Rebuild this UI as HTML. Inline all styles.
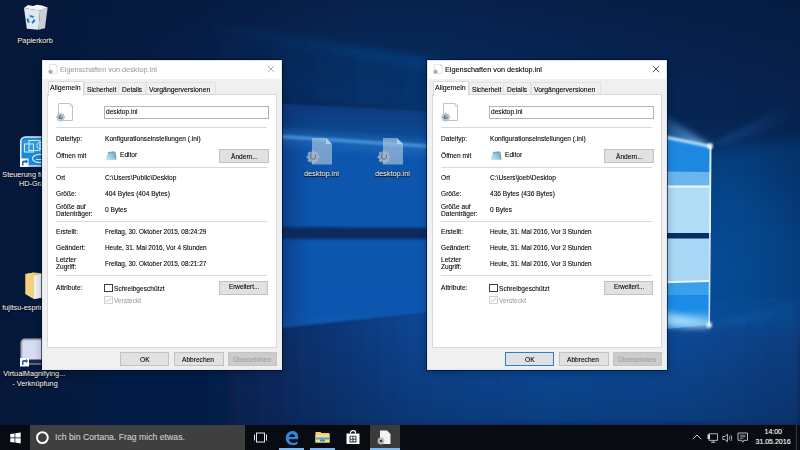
<!DOCTYPE html>
<html><head><meta charset="utf-8">
<style>
*{margin:0;padding:0;box-sizing:border-box}
html,body{width:800px;height:450px;overflow:hidden;background:#04163a;font-family:"Liberation Sans",sans-serif}
.abs{position:absolute}
.t{position:absolute;white-space:pre;line-height:1;transform-origin:0 0;-webkit-text-stroke:0.1px currentColor}
.dlg{position:absolute;top:60px;width:240px;height:310px;background:#f0f0f0;border:1px solid #6f7f95;box-shadow:0 0 0 1px rgba(0,8,28,0.6),0 2px 8px rgba(0,0,0,0.3)}
</style></head><body>
<svg class="abs" style="left:0;top:0" width="800" height="425" viewBox="0 0 800 425">
<defs>
<radialGradient id="gright" cx="700" cy="270" r="190" gradientUnits="userSpaceOnUse" gradientTransform="translate(700 270) scale(1 0.85) translate(-700 -270)">
<stop offset="0" stop-color="#0b4a94"/><stop offset="0.5" stop-color="#0a4288" stop-opacity="0.7"/><stop offset="1" stop-color="#0a3470" stop-opacity="0"/>
</radialGradient>
<linearGradient id="gproj" x1="0" y1="105" x2="0" y2="330" gradientUnits="userSpaceOnUse">
<stop offset="0" stop-color="#0a3a7c"/><stop offset="0.15" stop-color="#0a4a96"/><stop offset="0.2" stop-color="#0b55ac"/><stop offset="1" stop-color="#0b58b0"/>
</linearGradient>
<linearGradient id="gbot" x1="200" y1="0" x2="800" y2="0" gradientUnits="userSpaceOnUse">
<stop offset="0" stop-color="#061e48"/><stop offset="0.15" stop-color="#082e68"/><stop offset="0.35" stop-color="#0a4490"/><stop offset="0.58" stop-color="#0b4e9e"/><stop offset="0.8" stop-color="#0b4a98"/><stop offset="1" stop-color="#0a3e80"/>
</linearGradient>
<linearGradient id="gbotv" x1="0" y1="325" x2="0" y2="425" gradientUnits="userSpaceOnUse">
<stop offset="0" stop-color="#051839" stop-opacity="0"/><stop offset="1" stop-color="#051839" stop-opacity="0.3"/>
</linearGradient>
<linearGradient id="gtop" x1="0" y1="0" x2="0" y2="90" gradientUnits="userSpaceOnUse">
<stop offset="0" stop-color="#051839" stop-opacity="0.55"/><stop offset="1" stop-color="#051839" stop-opacity="0"/>
</linearGradient>
<linearGradient id="gbase" x1="0" y1="0" x2="800" y2="0" gradientUnits="userSpaceOnUse">
<stop offset="0" stop-color="#05183a"/><stop offset="0.25" stop-color="#061f4a"/><stop offset="0.45" stop-color="#092d62"/><stop offset="0.55" stop-color="#082c62"/><stop offset="0.8" stop-color="#072554"/><stop offset="1" stop-color="#06214c"/>
</linearGradient>
<linearGradient id="gsideR" x1="711" y1="0" x2="840" y2="0" gradientUnits="userSpaceOnUse">
<stop offset="0" stop-color="#0a529c" stop-opacity="0.55"/><stop offset="1" stop-color="#0a4c94" stop-opacity="0.2"/>
</linearGradient>
<linearGradient id="gstreak" x1="200" y1="0" x2="420" y2="0" gradientUnits="userSpaceOnUse"><stop offset="0" stop-color="#0c4890" stop-opacity="0"/><stop offset="1" stop-color="#0c4890" stop-opacity="0.55"/></linearGradient>
<linearGradient id="gstreak2" x1="200" y1="0" x2="420" y2="0" gradientUnits="userSpaceOnUse"><stop offset="0" stop-color="#0a3a7a" stop-opacity="0"/><stop offset="1" stop-color="#0a3a7a" stop-opacity="0.45"/></linearGradient>
<linearGradient id="gfan" x1="711" y1="146" x2="640" y2="120" gradientUnits="userSpaceOnUse"><stop offset="0" stop-color="#7cc8ff" stop-opacity="0.9"/><stop offset="1" stop-color="#2a80d8" stop-opacity="0"/></linearGradient>
<linearGradient id="gfanR" x1="711" y1="146" x2="800" y2="108" gradientUnits="userSpaceOnUse"><stop offset="0" stop-color="#3a90e0" stop-opacity="0.35"/><stop offset="1" stop-color="#1a5aa8" stop-opacity="0"/></linearGradient>
<linearGradient id="gfanR2" x1="709" y1="325" x2="800" y2="310" gradientUnits="userSpaceOnUse"><stop offset="0" stop-color="#3a90e0" stop-opacity="0.35"/><stop offset="1" stop-color="#1a5aa8" stop-opacity="0"/></linearGradient>
<filter id="b2" x="-10%" y="-10%" width="120%" height="120%"><feGaussianBlur stdDeviation="2.5"/></filter>
<filter id="b1" x="-10%" y="-10%" width="120%" height="120%"><feGaussianBlur stdDeviation="1.2"/></filter>
<filter id="b3" x="-20%" y="-50%" width="140%" height="200%"><feGaussianBlur stdDeviation="3"/></filter>
<filter id="b8" x="-50%" y="-50%" width="200%" height="200%"><feGaussianBlur stdDeviation="8"/></filter>
<clipPath id="clogo"><rect x="600" y="100" width="110" height="240"/></clipPath>
</defs>
<rect width="800" height="425" fill="url(#gbase)"/>
<rect width="800" height="425" fill="url(#gright)"/>
<rect x="0" y="0" width="800" height="90" fill="url(#gtop)"/>
<polygon points="200,20 428,58 620,92 620,106 428,72 200,32" fill="url(#gstreak)" filter="url(#b3)"/>
<polygon points="200,32 428,72 620,106 620,140 428,110 200,90" fill="url(#gstreak2)" filter="url(#b3)"/>
<!-- below projection -->
<polygon points="100,343 281,326 428,310 711,298 800,298 800,425 100,425" fill="url(#gbot)" filter="url(#b3)"/>
<rect x="0" y="325" width="800" height="100" fill="url(#gbotv)"/>
<!-- projection of light -->
<polygon points="230,101 428,111 600,124 711,146 711,300 428,312.5 281,328 230,333" fill="url(#gproj)" filter="url(#b1)"/>
<polygon points="230,101 300,105 300,330 230,331" fill="#072c66" opacity="0.35" filter="url(#b8)"/>
<polygon points="230,131.5 428,144.5 600,156 600,159 428,148 230,135" fill="#5aa8ea" opacity="0.85" filter="url(#b1)"/>
<polygon points="230,126 428,140 600,150 600,166 428,156 230,142" fill="#2f80d0" opacity="0.35" filter="url(#b3)"/>
<polygon points="230,227 711,229 711,239 230,239" fill="#072c5e" filter="url(#b1)"/>
<!-- right side glow + rays -->
<polygon points="711,150 840,130 840,335 711,325" fill="url(#gsideR)" filter="url(#b8)"/>
<polygon points="711,146 640,100 640,150" fill="url(#gfan)" filter="url(#b3)"/>
<polygon points="711,146 800,95 800,120" fill="url(#gfanR)" filter="url(#b3)"/>
<polygon points="709,325 800,300 800,318" fill="url(#gfanR2)" filter="url(#b3)"/>
<!-- logo panes -->
<polygon points="600,123 711,146 711,233 600,233" fill="#1e88e0"/>
<polygon points="600,171 711,172 711,187 600,187" fill="#6ab6ec"/>
<polygon points="600,187 711,187 711,233 600,233" fill="#b0dcf6"/>
<polygon points="600,185.6 711,185.6 711,187.4 600,187.4" fill="#eef8ff"/>
<polygon points="600,233 711,233 711,238.5 600,238.5" fill="#0a2e60"/>
<polygon points="600,238.5 709,238.5 709,281 600,284" fill="#a8d6f4"/>
<polygon points="600,284 709,281 709,295.5 600,296" fill="#3aa0ea"/>
<polygon points="600,296 709,295.5 709,325 600,335" fill="#1a8ce6"/>
<polygon points="600,283 709,280 709,282 600,285" fill="#e8f6ff"/>
<polygon points="709.5,146 711.5,146 710,326 708.5,326" fill="#e6f6ff" opacity="0.9"/>
<polygon points="600,122 711,145 711,148 600,125" fill="#cfeeff" opacity="0.9" filter="url(#b1)"/>
<polygon points="660,310 709,323 709,327 660,326" fill="#d8f2ff" opacity="0.6" filter="url(#b3)"/>
<circle cx="710" cy="146" r="3" fill="#ffffff" opacity="0.8" filter="url(#b1)"/>
<circle cx="709" cy="325" r="3" fill="#ffffff" opacity="0.8" filter="url(#b1)"/>
<g clip-path="url(#clogo)"><ellipse cx="695" cy="321" rx="26" ry="7" fill="#bfe6ff" opacity="0.45" filter="url(#b3)"/></g>
</svg>

<style>
.lbl{position:absolute;white-space:pre;line-height:1;color:#fff;font-size:7.3px;text-shadow:0 0 1.5px #000,0 1px 1px #000}
</style>
<!-- recycle bin -->
<svg class="abs" style="left:0;top:0" width="60" height="35" viewBox="0 0 60 35">
<path d="M24 8 L40 10.5 L38.5 29.8 L26.8 28.8 Z" fill="#e4e7ec"/>
<path d="M40 10.5 L47.6 7.5 L45 28.2 L38.5 29.8 Z" fill="#c9cfd7"/>
<path d="M24 8 L28 5 L33 6 L37 4.8 L42 5.5 L47.6 7.5 L40 10.5 Z" fill="#f4f5f7"/>
<circle cx="31" cy="19.5" r="3.3" fill="none" stroke="#1b7fd0" stroke-width="2" stroke-dasharray="4.2 2.7"/>
</svg>
<div class="lbl" style="left:17.5px;top:37.3px">Papierkorb</div>
<!-- intel -->
<svg class="abs" style="left:19px;top:136px" width="32" height="32" viewBox="0 0 32 32">
<rect x="1.8" y="1" width="28.5" height="29" rx="4.5" fill="#1a8ad4" stroke="#d8eef9" stroke-width="1.6"/>
<rect x="4" y="3.5" width="24" height="13" rx="2" fill="#2a9ae0"/>
<rect x="5.5" y="8" width="9" height="8" fill="none" stroke="#d4ecf8" stroke-width="1"/>
<rect x="10" y="4.5" width="11" height="10" fill="none" stroke="#d4ecf8" stroke-width="1"/>
<circle cx="21" cy="9.5" r="3.2" fill="none" stroke="#e6f4fb" stroke-width="1"/>
<path d="M20.2 8 L22.6 9.5 L20.2 11 Z" fill="#e6f4fb"/>
<ellipse cx="21" cy="22.5" rx="7.5" ry="4.2" fill="none" stroke="#d4ecf8" stroke-width="1.2"/>
<path d="M17 23.5 h8" stroke="#d4ecf8" stroke-width="1"/>
<rect x="1" y="22.5" width="8.5" height="8.5" fill="#fff"/>
<path d="M3 29.5 L3 26.5 C3 25 4 24.5 5.5 24.5 H7 V23.3 L9 25.5 L7 27.7 V26.5 H5.5 C4.7 26.5 4.5 27 4.5 27.7 V29.5 Z" fill="#2a5fc0"/>
</svg>
<div class="lbl" style="left:2.3px;top:171px">Steuerung für Intel(R)</div>
<div class="lbl" style="left:19px;top:180.3px">HD-Grafik</div>
<!-- folder -->
<svg class="abs" style="left:24px;top:272px" width="26" height="28" viewBox="0 0 26 28">
<path d="M1.5 2 L10 0.5 L24 2 V25 L10 27 L1.5 22 Z" fill="#e9c86e"/>
<path d="M10 3.5 L20 1.5 V25 L10 27 Z" fill="#eef1f6"/>
<path d="M1.5 2 L10 0.5 V27 L1.5 22 Z" fill="#f2d27e"/>
</svg>
<div class="lbl" style="left:2.2px;top:303.5px">fujitsu-esprimo</div>
<!-- magnifier -->
<svg class="abs" style="left:19px;top:338px" width="32" height="29" viewBox="0 0 32 29">
<rect x="2.5" y="1.5" width="28" height="24" rx="3.5" fill="#dfe3f0" stroke="#a8acb6" stroke-width="2"/>
<rect x="4" y="4" width="25" height="17" fill="#d7dcf3"/>
<rect x="3.5" y="21.5" width="26" height="4" fill="#1a2a4a"/>
<rect x="1" y="20" width="9" height="8.5" fill="#fff"/>
<path d="M3 27 L3 24 C3 22.5 4 22 5.5 22 H7 V20.8 L9 23 L7 25.2 V24 H5.5 C4.7 24 4.5 24.5 4.5 25.2 V27 Z" fill="#2a5fc0"/>
</svg>
<div class="lbl" style="left:3.3px;top:369.8px">VirtualMagnifying...</div>
<div class="lbl" style="left:12.3px;top:379.9px">- Verknüpfung</div>
<!-- hidden desktop.ini icons -->
<svg class="abs" style="left:304px;top:137px" width="30" height="29" viewBox="0 0 30 29">
<path d="M8 1 H22 L28 7 V27.5 H8 Z" fill="#b4cde3" opacity="0.62"/>
<path d="M22 1 V7 H28 Z" fill="#d6e6f3" opacity="0.6"/>
<path d="M13.76 18.45 L15.38 18.73 L15.38 21.27 L13.76 21.55 L13.46 22.27 L14.40 23.61 L12.61 25.40 L11.27 24.46 L10.55 24.76 L10.27 26.38 L7.73 26.38 L7.45 24.76 L6.73 24.46 L5.39 25.40 L3.60 23.61 L4.54 22.27 L4.24 21.55 L2.62 21.27 L2.62 18.73 L4.24 18.45 L4.54 17.73 L3.60 16.39 L5.39 14.60 L6.73 15.54 L7.45 15.24 L7.73 13.62 L10.27 13.62 L10.55 15.24 L11.27 15.54 L12.61 14.60 L14.40 16.39 L13.46 17.73 Z" fill="#a9b6c4" opacity="0.85"/>
<path d="M7.5 16.5 C5.8 17.8 6.2 22 9 22.2 C11.2 22.3 12 20 11.2 17.8" fill="none" stroke="#5b6c80" stroke-width="1.1" opacity="0.9"/>
</svg>
<div class="lbl" style="left:304px;top:169.5px">desktop.ini</div>
<svg class="abs" style="left:375px;top:137px" width="30" height="29" viewBox="0 0 30 29">
<path d="M8 1 H22 L28 7 V27.5 H8 Z" fill="#b4cde3" opacity="0.62"/>
<path d="M22 1 V7 H28 Z" fill="#d6e6f3" opacity="0.6"/>
<path d="M13.76 18.45 L15.38 18.73 L15.38 21.27 L13.76 21.55 L13.46 22.27 L14.40 23.61 L12.61 25.40 L11.27 24.46 L10.55 24.76 L10.27 26.38 L7.73 26.38 L7.45 24.76 L6.73 24.46 L5.39 25.40 L3.60 23.61 L4.54 22.27 L4.24 21.55 L2.62 21.27 L2.62 18.73 L4.24 18.45 L4.54 17.73 L3.60 16.39 L5.39 14.60 L6.73 15.54 L7.45 15.24 L7.73 13.62 L10.27 13.62 L10.55 15.24 L11.27 15.54 L12.61 14.60 L14.40 16.39 L13.46 17.73 Z" fill="#a9b6c4" opacity="0.85"/>
<path d="M7.5 16.5 C5.8 17.8 6.2 22 9 22.2 C11.2 22.3 12 20 11.2 17.8" fill="none" stroke="#5b6c80" stroke-width="1.1" opacity="0.9"/>
</svg>
<div class="lbl" style="left:375px;top:169.5px">desktop.ini</div>

<div class="dlg" style="left:42px;border-color:#e4e8ee">
<div class="abs" style="left:0px;top:0px;width:238px;height:17.5px;background:#fff"></div>
<div class="abs" style="left:5px;top:3px"><svg class="abs" style="left:0px;top:0px;opacity:1" width="9.9" height="10.450000000000001" viewBox="0 0 18 19">
<path d="M2.5 0.5 H14 L16.5 3 V17.5 H2.5 Z" fill="#fff" stroke="#c9c9c9" stroke-width="1"/>
<path d="M14 0.5 V3 H16.5" fill="none" stroke="#c9c9c9" stroke-width="0.8"/>
<path d="M7.93 13.12 L9.11 13.30 L9.11 15.10 L7.93 15.28 L7.72 15.79 L8.42 16.76 L7.16 18.02 L6.19 17.32 L5.68 17.53 L5.50 18.71 L3.70 18.71 L3.52 17.53 L3.01 17.32 L2.04 18.02 L0.78 16.76 L1.48 15.79 L1.27 15.28 L0.09 15.10 L0.09 13.30 L1.27 13.12 L1.48 12.61 L0.78 11.64 L2.04 10.38 L3.01 11.08 L3.52 10.87 L3.70 9.69 L5.50 9.69 L5.68 10.87 L6.19 11.08 L7.16 10.38 L8.42 11.64 L7.72 12.61 Z" fill="#c4c8cc"/>
<circle cx="4.6" cy="14.2" r="1.9" fill="#5f6d7c"/><circle cx="5.1" cy="13.8" r="1.0" fill="#c4c8cc"/>
</svg></div>
<div class="t" style="left:16.5px;top:4.58px;font-size:7.96px;color:#a2a2a2;transform:scaleX(0.917);">Eigenschaften von desktop.ini</div>
<svg class="abs" style="left:224px;top:4px" width="8" height="8" viewBox="0 0 8 8"><path d="M0.8 0.8 L7.2 7.2 M7.2 0.8 L0.8 7.2" stroke="#9a9a9a" stroke-width="0.8"/></svg>
<div class="abs" style="left:40.5px;top:21px;width:35px;height:12.5px;background:#f0f0f0;border:1px solid #e2e2e2;border-bottom:none"></div>
<div class="abs" style="left:75px;top:21px;width:28px;height:12.5px;background:#f0f0f0;border:1px solid #e2e2e2;border-bottom:none"></div>
<div class="abs" style="left:102.5px;top:21px;width:70px;height:12.5px;background:#f0f0f0;border:1px solid #e2e2e2;border-bottom:none"></div>
<div class="abs" style="left:4px;top:33px;width:229.5px;height:254px;background:#fff;border:1px solid #d9d9d9"></div>
<div class="abs" style="left:4.5px;top:19.5px;width:36.5px;height:15.5px;background:#fff;border:1px solid #d9d9d9;border-bottom:none"></div>
<div class="t" style="left:7px;top:23.19px;font-size:7.63px;color:#000;transform:scaleX(0.917);">Allgemein</div>
<div class="t" style="left:44px;top:24.65px;font-size:7.19px;color:#000;transform:scaleX(0.917);">Sicherheit</div>
<div class="t" style="left:79.1px;top:24.65px;font-size:7.19px;color:#000;transform:scaleX(0.917);">Details</div>
<div class="t" style="left:106.2px;top:24.51px;font-size:7.48px;color:#000;transform:scaleX(0.917);">Vorgängerversionen</div>
<div class="abs" style="left:13px;top:42px"><svg class="abs" style="left:0px;top:0px;opacity:1" width="18.0" height="19.0" viewBox="0 0 18 19">
<path d="M2.5 0.5 H14 L16.5 3 V17.5 H2.5 Z" fill="#fff" stroke="#c4c4c4" stroke-width="1"/>
<path d="M14 0.5 V3 H16.5" fill="none" stroke="#c4c4c4" stroke-width="0.8"/>
<path d="M7.93 13.12 L9.11 13.30 L9.11 15.10 L7.93 15.28 L7.72 15.79 L8.42 16.76 L7.16 18.02 L6.19 17.32 L5.68 17.53 L5.50 18.71 L3.70 18.71 L3.52 17.53 L3.01 17.32 L2.04 18.02 L0.78 16.76 L1.48 15.79 L1.27 15.28 L0.09 15.10 L0.09 13.30 L1.27 13.12 L1.48 12.61 L0.78 11.64 L2.04 10.38 L3.01 11.08 L3.52 10.87 L3.70 9.69 L5.50 9.69 L5.68 10.87 L6.19 11.08 L7.16 10.38 L8.42 11.64 L7.72 12.61 Z" fill="#b9c2cb"/>
<circle cx="4.6" cy="14.2" r="1.9" fill="#5f6d7c"/><circle cx="5.1" cy="13.8" r="1.0" fill="#b9c2cb"/>
</svg></div>
<div class="abs" style="left:61px;top:45.4px;width:165px;height:13.1px;background:#fff;border:1px solid #b4b4b4"></div>
<div class="t" style="left:63.2px;top:47.00px;font-size:7.19px;color:#000;transform:scaleX(0.917);">desktop.ini</div>
<div class="abs" style="left:13px;top:66px;width:211px;height:1px;background:#d9d9d9"></div>
<div class="abs" style="left:13px;top:106px;width:211px;height:1px;background:#d9d9d9"></div>
<div class="abs" style="left:13px;top:160px;width:211px;height:1px;background:#d9d9d9"></div>
<div class="abs" style="left:13px;top:214px;width:211px;height:1px;background:#d9d9d9"></div>
<div class="t" style="left:13px;top:74.20px;font-size:7.19px;color:#000;transform:scaleX(0.917);">Dateityp:</div>
<div class="t" style="left:61.5px;top:74.20px;font-size:7.19px;color:#000;transform:scaleX(0.917);">Konfigurationseinstellungen (.ini)</div>
<div class="t" style="left:13px;top:90.75px;font-size:7.19px;color:#000;transform:scaleX(0.917);">Öffnen mit</div>
<svg class="abs" style="left:61.5px;top:90px" width="12" height="10" viewBox="0 0 12 10"><defs><linearGradient id="ged42" x1="0" y1="1" x2="1" y2="0"><stop offset="0" stop-color="#d2f0f8"/><stop offset="1" stop-color="#5ea7c4"/></linearGradient></defs><path d="M3 1.5 L9.5 0.8 L10.3 8.8 L0.5 9.3 Z" fill="url(#ged42)"/><path d="M9.5 0.8 L10.6 1.2 L11.5 8.6 L10.3 8.8 Z" fill="#7d8e96"/><path d="M3 1.5 L9.5 0.8" stroke="#5a8ea0" stroke-width="0.8"/></svg>
<div class="t" style="left:76.7px;top:90.45px;font-size:7.19px;color:#000;transform:scaleX(0.917);">Editor</div>
<div class="abs" style="left:176px;top:88px;width:49.5px;height:13.5px;background:#e1e1e1;border:1px solid #c2c2c2"></div>
<div class="t" style="left:188.2px;top:91.75px;font-size:7.19px;color:#000;transform:scaleX(0.917);">Ändern...</div>
<div class="t" style="left:13px;top:113.15px;font-size:7.19px;color:#000;transform:scaleX(0.917);">Ort</div>
<div class="t" style="left:61.5px;top:112.95px;font-size:7.19px;color:#000;transform:scaleX(0.917);">C:\Users\Public\Desktop</div>
<div class="t" style="left:13px;top:128.50px;font-size:7.19px;color:#000;transform:scaleX(0.917);">Größe:</div>
<div class="t" style="left:61.5px;top:129.05px;font-size:7.19px;color:#000;transform:scaleX(0.917);">404 Bytes (404 Bytes)</div>
<div class="t" style="left:13px;top:141.80px;font-size:7.19px;color:#000;transform:scaleX(0.917);">Größe auf</div>
<div class="t" style="left:13px;top:148.95px;font-size:7.19px;color:#000;transform:scaleX(0.917);">Datenträger:</div>
<div class="t" style="left:61.5px;top:145.15px;font-size:7.19px;color:#000;transform:scaleX(0.917);">0 Bytes</div>
<div class="t" style="left:13px;top:166.55px;font-size:7.19px;color:#000;transform:scaleX(0.917);">Erstellt:</div>
<div class="t" style="left:61.5px;top:166.65px;font-size:6.98px;color:#000;transform:scaleX(0.917);">Freitag, 30. Oktober 2015, 08:24:29</div>
<div class="t" style="left:13px;top:183.05px;font-size:7.19px;color:#000;transform:scaleX(0.917);">Geändert:</div>
<div class="t" style="left:61.5px;top:183.15px;font-size:6.98px;color:#000;transform:scaleX(0.917);">Heute, 31. Mai 2016, Vor 4 Stunden</div>
<div class="t" style="left:13px;top:194.75px;font-size:7.19px;color:#000;transform:scaleX(0.917);">Letzter</div>
<div class="t" style="left:13px;top:202.25px;font-size:7.19px;color:#000;transform:scaleX(0.917);">Zugriff:</div>
<div class="t" style="left:61.5px;top:198.65px;font-size:6.98px;color:#000;transform:scaleX(0.917);">Freitag, 30. Oktober 2015, 08:21:27</div>
<div class="t" style="left:13px;top:222.55px;font-size:7.19px;color:#000;transform:scaleX(0.917);">Attribute:</div>
<div class="abs" style="left:61px;top:223px;width:8.8px;height:7.8px;background:#fff;border:1px solid #3a3a3a"></div>
<div class="t" style="left:71.3px;top:223.65px;font-size:7.19px;color:#000;transform:scaleX(0.917);">Schreibgeschützt</div>
<div class="abs" style="left:176px;top:220px;width:49px;height:13.7px;background:#e1e1e1;border:1px solid #c2c2c2"></div>
<div class="t" style="left:185.5px;top:223.48px;font-size:6.92px;color:#000;transform:scaleX(0.917);">Erweitert...</div>
<div class="abs" style="left:61px;top:235.2px;width:8.8px;height:7.6px;background:#fff;border:1px solid #cfcfcf"></div>
<svg class="abs" style="left:61px;top:235.2px" width="9" height="8" viewBox="0 0 9 8"><path d="M1.8 4 L3.6 5.8 L7.2 2" fill="none" stroke="#b8b8b8" stroke-width="0.9"/></svg>
<div class="t" style="left:71.3px;top:235.65px;font-size:7.19px;color:#a3a3a3;transform:scaleX(0.917);">Versteckt</div>
<div class="abs" style="left:76.7px;top:291px;width:49.8px;height:14px;background:#e1e1e1;border:1px solid #c2c2c2"></div>
<div class="t" style="left:97px;top:294.90px;font-size:7.19px;color:#000;transform:scaleX(0.917);">OK</div>
<div class="abs" style="left:131px;top:291px;width:49.8px;height:14px;background:#e1e1e1;border:1px solid #c2c2c2"></div>
<div class="t" style="left:139.3px;top:294.90px;font-size:7.19px;color:#000;transform:scaleX(0.917);">Abbrechen</div>
<div class="abs" style="left:185px;top:291px;width:49.2px;height:14px;background:#cccccc;border:1px solid #c4c4c4"></div>
<div class="t" style="left:190px;top:294.90px;font-size:7.19px;color:#a0a0a0;transform:scaleX(0.917);">Übernehmen</div>
</div>
<div class="dlg" style="left:427px;border-color:#dde8f2">
<div class="abs" style="left:0px;top:0px;width:238px;height:17.5px;background:#fff"></div>
<div class="abs" style="left:5px;top:3px"><svg class="abs" style="left:0px;top:0px;opacity:1" width="9.9" height="10.450000000000001" viewBox="0 0 18 19">
<path d="M2.5 0.5 H14 L16.5 3 V17.5 H2.5 Z" fill="#fff" stroke="#c9c9c9" stroke-width="1"/>
<path d="M14 0.5 V3 H16.5" fill="none" stroke="#c9c9c9" stroke-width="0.8"/>
<path d="M7.93 13.12 L9.11 13.30 L9.11 15.10 L7.93 15.28 L7.72 15.79 L8.42 16.76 L7.16 18.02 L6.19 17.32 L5.68 17.53 L5.50 18.71 L3.70 18.71 L3.52 17.53 L3.01 17.32 L2.04 18.02 L0.78 16.76 L1.48 15.79 L1.27 15.28 L0.09 15.10 L0.09 13.30 L1.27 13.12 L1.48 12.61 L0.78 11.64 L2.04 10.38 L3.01 11.08 L3.52 10.87 L3.70 9.69 L5.50 9.69 L5.68 10.87 L6.19 11.08 L7.16 10.38 L8.42 11.64 L7.72 12.61 Z" fill="#c4c8cc"/>
<circle cx="4.6" cy="14.2" r="1.9" fill="#5f6d7c"/><circle cx="5.1" cy="13.8" r="1.0" fill="#c4c8cc"/>
</svg></div>
<div class="t" style="left:16.5px;top:4.58px;font-size:7.96px;color:#000;transform:scaleX(0.917);">Eigenschaften von desktop.ini</div>
<svg class="abs" style="left:224px;top:4px" width="8" height="8" viewBox="0 0 8 8"><path d="M0.8 0.8 L7.2 7.2 M7.2 0.8 L0.8 7.2" stroke="#222" stroke-width="0.8"/></svg>
<div class="abs" style="left:40.5px;top:21px;width:35px;height:12.5px;background:#f0f0f0;border:1px solid #e2e2e2;border-bottom:none"></div>
<div class="abs" style="left:75px;top:21px;width:28px;height:12.5px;background:#f0f0f0;border:1px solid #e2e2e2;border-bottom:none"></div>
<div class="abs" style="left:102.5px;top:21px;width:70px;height:12.5px;background:#f0f0f0;border:1px solid #e2e2e2;border-bottom:none"></div>
<div class="abs" style="left:4px;top:33px;width:229.5px;height:254px;background:#fff;border:1px solid #d9d9d9"></div>
<div class="abs" style="left:4.5px;top:19.5px;width:36.5px;height:15.5px;background:#fff;border:1px solid #d9d9d9;border-bottom:none"></div>
<div class="t" style="left:7px;top:23.19px;font-size:7.63px;color:#000;transform:scaleX(0.917);">Allgemein</div>
<div class="t" style="left:44px;top:24.65px;font-size:7.19px;color:#000;transform:scaleX(0.917);">Sicherheit</div>
<div class="t" style="left:79.1px;top:24.65px;font-size:7.19px;color:#000;transform:scaleX(0.917);">Details</div>
<div class="t" style="left:106.2px;top:24.51px;font-size:7.48px;color:#000;transform:scaleX(0.917);">Vorgängerversionen</div>
<div class="abs" style="left:13px;top:42px"><svg class="abs" style="left:0px;top:0px;opacity:1" width="18.0" height="19.0" viewBox="0 0 18 19">
<path d="M2.5 0.5 H14 L16.5 3 V17.5 H2.5 Z" fill="#fff" stroke="#c4c4c4" stroke-width="1"/>
<path d="M14 0.5 V3 H16.5" fill="none" stroke="#c4c4c4" stroke-width="0.8"/>
<path d="M7.93 13.12 L9.11 13.30 L9.11 15.10 L7.93 15.28 L7.72 15.79 L8.42 16.76 L7.16 18.02 L6.19 17.32 L5.68 17.53 L5.50 18.71 L3.70 18.71 L3.52 17.53 L3.01 17.32 L2.04 18.02 L0.78 16.76 L1.48 15.79 L1.27 15.28 L0.09 15.10 L0.09 13.30 L1.27 13.12 L1.48 12.61 L0.78 11.64 L2.04 10.38 L3.01 11.08 L3.52 10.87 L3.70 9.69 L5.50 9.69 L5.68 10.87 L6.19 11.08 L7.16 10.38 L8.42 11.64 L7.72 12.61 Z" fill="#b9c2cb"/>
<circle cx="4.6" cy="14.2" r="1.9" fill="#5f6d7c"/><circle cx="5.1" cy="13.8" r="1.0" fill="#b9c2cb"/>
</svg></div>
<div class="abs" style="left:61px;top:45.4px;width:165px;height:13.1px;background:#fff;border:1px solid #b4b4b4"></div>
<div class="t" style="left:63.2px;top:47.00px;font-size:7.19px;color:#000;transform:scaleX(0.917);">desktop.ini</div>
<div class="abs" style="left:13px;top:66px;width:211px;height:1px;background:#d9d9d9"></div>
<div class="abs" style="left:13px;top:106px;width:211px;height:1px;background:#d9d9d9"></div>
<div class="abs" style="left:13px;top:160px;width:211px;height:1px;background:#d9d9d9"></div>
<div class="abs" style="left:13px;top:214px;width:211px;height:1px;background:#d9d9d9"></div>
<div class="t" style="left:13px;top:74.20px;font-size:7.19px;color:#000;transform:scaleX(0.917);">Dateityp:</div>
<div class="t" style="left:61.5px;top:74.20px;font-size:7.19px;color:#000;transform:scaleX(0.917);">Konfigurationseinstellungen (.ini)</div>
<div class="t" style="left:13px;top:90.75px;font-size:7.19px;color:#000;transform:scaleX(0.917);">Öffnen mit</div>
<svg class="abs" style="left:61.5px;top:90px" width="12" height="10" viewBox="0 0 12 10"><defs><linearGradient id="ged427" x1="0" y1="1" x2="1" y2="0"><stop offset="0" stop-color="#d2f0f8"/><stop offset="1" stop-color="#5ea7c4"/></linearGradient></defs><path d="M3 1.5 L9.5 0.8 L10.3 8.8 L0.5 9.3 Z" fill="url(#ged427)"/><path d="M9.5 0.8 L10.6 1.2 L11.5 8.6 L10.3 8.8 Z" fill="#7d8e96"/><path d="M3 1.5 L9.5 0.8" stroke="#5a8ea0" stroke-width="0.8"/></svg>
<div class="t" style="left:76.7px;top:90.45px;font-size:7.19px;color:#000;transform:scaleX(0.917);">Editor</div>
<div class="abs" style="left:176px;top:88px;width:49.5px;height:13.5px;background:#e1e1e1;border:1px solid #c2c2c2"></div>
<div class="t" style="left:188.2px;top:91.75px;font-size:7.19px;color:#000;transform:scaleX(0.917);">Ändern...</div>
<div class="t" style="left:13px;top:113.15px;font-size:7.19px;color:#000;transform:scaleX(0.917);">Ort</div>
<div class="t" style="left:61.5px;top:112.95px;font-size:7.19px;color:#000;transform:scaleX(0.917);">C:\Users\joeb\Desktop</div>
<div class="t" style="left:13px;top:128.50px;font-size:7.19px;color:#000;transform:scaleX(0.917);">Größe:</div>
<div class="t" style="left:61.5px;top:129.05px;font-size:7.19px;color:#000;transform:scaleX(0.917);">436 Bytes (436 Bytes)</div>
<div class="t" style="left:13px;top:141.80px;font-size:7.19px;color:#000;transform:scaleX(0.917);">Größe auf</div>
<div class="t" style="left:13px;top:148.95px;font-size:7.19px;color:#000;transform:scaleX(0.917);">Datenträger:</div>
<div class="t" style="left:61.5px;top:145.15px;font-size:7.19px;color:#000;transform:scaleX(0.917);">0 Bytes</div>
<div class="t" style="left:13px;top:166.55px;font-size:7.19px;color:#000;transform:scaleX(0.917);">Erstellt:</div>
<div class="t" style="left:61.5px;top:166.65px;font-size:6.98px;color:#000;transform:scaleX(0.917);">Heute, 31. Mai 2016, Vor 3 Stunden</div>
<div class="t" style="left:13px;top:183.05px;font-size:7.19px;color:#000;transform:scaleX(0.917);">Geändert:</div>
<div class="t" style="left:61.5px;top:183.15px;font-size:6.98px;color:#000;transform:scaleX(0.917);">Heute, 31. Mai 2016, Vor 2 Stunden</div>
<div class="t" style="left:13px;top:194.75px;font-size:7.19px;color:#000;transform:scaleX(0.917);">Letzter</div>
<div class="t" style="left:13px;top:202.25px;font-size:7.19px;color:#000;transform:scaleX(0.917);">Zugriff:</div>
<div class="t" style="left:61.5px;top:198.65px;font-size:6.98px;color:#000;transform:scaleX(0.917);">Heute, 31. Mai 2016, Vor 3 Stunden</div>
<div class="t" style="left:13px;top:222.55px;font-size:7.19px;color:#000;transform:scaleX(0.917);">Attribute:</div>
<div class="abs" style="left:61px;top:223px;width:8.8px;height:7.8px;background:#fff;border:1px solid #3a3a3a"></div>
<div class="t" style="left:71.3px;top:223.65px;font-size:7.19px;color:#000;transform:scaleX(0.917);">Schreibgeschützt</div>
<div class="abs" style="left:176px;top:220px;width:49px;height:13.7px;background:#e1e1e1;border:1px solid #c2c2c2"></div>
<div class="t" style="left:185.5px;top:223.48px;font-size:6.92px;color:#000;transform:scaleX(0.917);">Erweitert...</div>
<div class="abs" style="left:61px;top:235.2px;width:8.8px;height:7.6px;background:#fff;border:1px solid #cfcfcf"></div>
<svg class="abs" style="left:61px;top:235.2px" width="9" height="8" viewBox="0 0 9 8"><path d="M1.8 4 L3.6 5.8 L7.2 2" fill="none" stroke="#b8b8b8" stroke-width="0.9"/></svg>
<div class="t" style="left:71.3px;top:235.65px;font-size:7.19px;color:#a3a3a3;transform:scaleX(0.917);">Versteckt</div>
<div class="abs" style="left:76.7px;top:291px;width:49.8px;height:14px;background:#e1e1e1;border:1px solid #2a7fd4"></div>
<div class="t" style="left:97px;top:294.90px;font-size:7.19px;color:#000;transform:scaleX(0.917);">OK</div>
<div class="abs" style="left:131px;top:291px;width:49.8px;height:14px;background:#e1e1e1;border:1px solid #c2c2c2"></div>
<div class="t" style="left:139.3px;top:294.90px;font-size:7.19px;color:#000;transform:scaleX(0.917);">Abbrechen</div>
<div class="abs" style="left:185px;top:291px;width:49.2px;height:14px;background:#cccccc;border:1px solid #c4c4c4"></div>
<div class="t" style="left:190px;top:294.90px;font-size:7.19px;color:#a0a0a0;transform:scaleX(0.917);">Übernehmen</div>
</div>
<div class="abs" style="left:0;top:425px;width:800px;height:25px;background:#080b11"></div>
<!-- start -->
<svg class="abs" style="left:9.5px;top:431.5px" width="11" height="12" viewBox="0 0 11 12">
<path d="M0.3 2 L4.6 1.4 V5.6 H0.3 Z M5.3 1.3 L10.7 0.5 V5.6 H5.3 Z M0.3 6.3 H4.6 V10.5 L0.3 9.9 Z M5.3 6.3 H10.7 V11.4 L5.3 10.6 Z" fill="#fff"/>
</svg>
<!-- search -->
<div class="abs" style="left:30px;top:425px;width:215px;height:25px;background:#3f3f3f"></div>
<svg class="abs" style="left:34px;top:429px" width="17" height="17" viewBox="0 0 17 17"><circle cx="8.4" cy="8.6" r="5.4" fill="none" stroke="#fff" stroke-width="2"/></svg>
<div class="t" style="left:55px;top:433.2px;font-size:8.7px;color:#cdcdcd">Ich bin Cortana. Frag mich etwas.</div>
<!-- task view -->
<svg class="abs" style="left:253px;top:432px" width="15" height="11" viewBox="0 0 15 11">
<rect x="3.5" y="1" width="8" height="9" fill="none" stroke="#e6e6e6" stroke-width="1"/>
<path d="M1.5 2.5 V8.5 M13.5 2.5 V8.5" stroke="#e6e6e6" stroke-width="1"/>
</svg>
<!-- edge -->
<svg class="abs" style="left:285px;top:431px" width="14" height="14" viewBox="0 0 14 14">
<path d="M12.8 8.3 H4 C4.2 10.6 6 11.9 8.3 11.9 C10 11.9 11.4 11.3 12.5 10.6 V12.9 C11.3 13.6 9.7 14 7.8 14 C3.5 14 0.8 11.3 0.8 7.3 C0.8 3.2 3.6 0 7.6 0 C11.2 0 13.2 2.6 13.2 6.2 Z M4.1 6 H10 C9.9 4.1 8.9 2.9 7.2 2.9 C5.6 2.9 4.4 4.1 4.1 6 Z" fill="#2b8ae0"/>
</svg>
<!-- explorer -->
<svg class="abs" style="left:315px;top:431px" width="15" height="12" viewBox="0 0 15 12">
<path d="M0.5 1 H5.5 L6.5 2 H14.5 V11.5 H0.5 Z" fill="#f0cf6a"/>
<rect x="0.5" y="3.5" width="14" height="8" fill="#f7dc85"/>
<rect x="0.5" y="6.5" width="14" height="2" fill="#4aa6d6"/>
<path d="M5 8.5 H10 V10.5 H5 Z" fill="#3b8fc0"/>
</svg>
<!-- store -->
<svg class="abs" style="left:346px;top:430px" width="14" height="15" viewBox="0 0 14 15">
<path d="M4.5 3.5 V2.5 C4.5 1.3 5.5 0.7 7 0.7 C8.5 0.7 9.5 1.3 9.5 2.5 V3.5" fill="none" stroke="#fff" stroke-width="1.2"/>
<path d="M0.5 3.5 H13.5 V14 H0.5 Z" fill="#fff"/>
<path d="M3.6 5.8 H10.4 V12.4 H3.6 Z" fill="#080b11"/><path d="M4.4 6.6 H6.6 V8.7 H4.4 Z M7.4 6.6 H9.6 V8.7 H7.4 Z M4.4 9.5 H6.6 V11.6 H4.4 Z M7.4 9.5 H9.6 V11.6 H7.4 Z" fill="#fff"/>
</svg>
<!-- active app -->
<div class="abs" style="left:370px;top:425px;width:30px;height:25px;background:#3a3a3a"></div>
<svg class="abs" style="left:376px;top:430px" width="16" height="15" viewBox="0 0 16 15">
<path d="M4 0.5 H11 L14.5 4 V14 H4 Z" fill="#f2f2f2"/>
<circle cx="5" cy="11" r="3.4" fill="#b9b9b9"/><circle cx="5" cy="11" r="1.3" fill="#3a3a3a"/>
</svg>
<!-- underlines -->
<div class="abs" style="left:279px;top:448px;width:25px;height:2px;background:#7fb8ea"></div>
<div class="abs" style="left:310px;top:448px;width:25px;height:2px;background:#7fb8ea"></div>
<div class="abs" style="left:370px;top:448px;width:30px;height:2px;background:#7fb8ea"></div>
<!-- tray -->
<svg class="abs" style="left:692px;top:434px" width="10" height="6" viewBox="0 0 10 6"><path d="M0.8 5.2 L5 1 L9.2 5.2" fill="none" stroke="#dcdcdc" stroke-width="0.9"/></svg>
<svg class="abs" style="left:706.5px;top:432.5px" width="11" height="10" viewBox="0 0 11 10"><rect x="2" y="0.8" width="8.5" height="6.5" fill="none" stroke="#d8d8d8" stroke-width="0.8"/><path d="M6.2 7.3 V9 M4 9.3 H8.5" stroke="#d8d8d8" stroke-width="0.8"/><rect x="0.5" y="1.5" width="2.5" height="4.5" fill="#d8d8d8"/></svg>
<svg class="abs" style="left:721.5px;top:432.5px" width="11" height="10" viewBox="0 0 11 10"><path d="M0.8 3.5 H2.8 L5.5 1.2 V8.8 L2.8 6.5 H0.8 Z" fill="none" stroke="#d8d8d8" stroke-width="0.8"/><path d="M7.2 3.3 C7.9 4.3 7.9 5.7 7.2 6.7 M8.8 2 C10 3.6 10 6.4 8.8 8" fill="none" stroke="#d8d8d8" stroke-width="0.8"/></svg>
<svg class="abs" style="left:736.5px;top:432px" width="12" height="12" viewBox="0 0 12 12"><path d="M1 1 H10.5 V8.3 H6.8 L5.8 10.3 L4.8 8.3 H1 Z" fill="none" stroke="#d8d8d8" stroke-width="0.85"/><path d="M3 3.3 H8.5 M3 4.8 H8.5 M3 6.3 H6.5" stroke="#d8d8d8" stroke-width="0.6"/></svg>
<div class="t" style="left:764.5px;top:428.3px;font-size:7px;color:#fff">14:00</div>
<div class="t" style="left:755.5px;top:438.1px;font-size:7px;color:#fff">31.05.2016</div>
<div class="abs" style="left:796px;top:425px;width:1px;height:25px;background:#3a3a3a"></div>

</body></html>
